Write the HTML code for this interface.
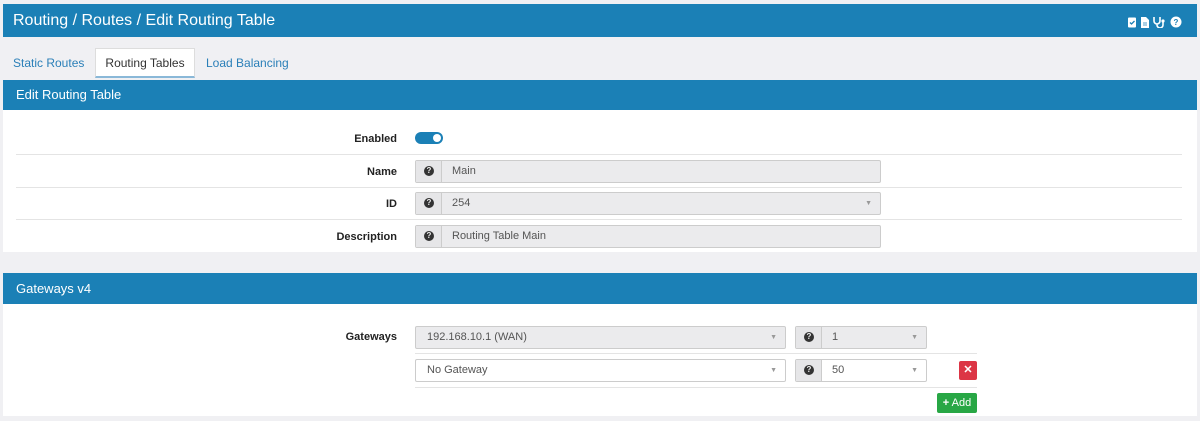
<!DOCTYPE html>
<html><head><style>
*{box-sizing:border-box;margin:0;padding:0}
body{width:1200px;height:421px;background:#f0f0f3;font-family:"Liberation Sans",sans-serif;font-size:11px;color:#333;position:relative;overflow:hidden}
.abs{position:absolute}
.blue{background:#1b80b6;color:#fff}
.lbl{position:absolute;right:803px;font-weight:bold;font-size:11px;color:#222}
.sep{position:absolute;left:16px;width:1166px;height:1px;background:#e4e4e4}
.inp{position:absolute;border:1px solid #ccc;border-radius:2px;background:#ebebed;height:23px;font-size:11px;color:#555;line-height:23px}
.inp > span{top:-1px}
.inp .h{position:absolute;left:0;top:0;width:26px;height:21px;border-right:1px solid #ccc;background:#e6e6e8}
.q{position:absolute;left:8px;top:5px;width:10px;height:10px;border-radius:50%;background:#333;color:#eee;font-size:8px;line-height:10px;font-weight:bold;text-align:center}
.car{position:absolute;right:8px;color:#999;font-size:7px}
</style></head><body>
<div class="abs blue" style="left:3px;top:4px;width:1194px;height:33px;font-size:16px;line-height:33px;padding-left:10px">Routing / Routes / Edit Routing Table
<svg style="position:absolute;right:10px;top:12px" width="60" height="12" viewBox="0 0 60 12">
<rect x="1" y="1.5" width="8" height="10" rx="1" fill="#fff"/><path d="M3 6.5l1.5 1.5 3-3" stroke="#1b80b6" stroke-width="1.3" fill="none"/>
<path d="M14 1h5l3 3v8h-8z" fill="#fff"/><path d="M16 7h4M16 9h4" stroke="#1b80b6" stroke-width="0.8"/>
<path d="M27 1v4a3 3 0 0 0 6 0V1M30 8v1a3 3 0 0 0 6 0V6" stroke="#fff" stroke-width="1.6" fill="none"/><circle cx="36" cy="5" r="1.6" fill="#fff"/>
<circle cx="49" cy="6" r="5.5" fill="#fff"/><text x="49" y="9" font-size="8" font-weight="bold" fill="#1b80b6" text-anchor="middle" font-family="Liberation Sans">?</text>
</svg></div>
<div class="abs" style="left:13px;top:56px;color:#2a7fb8;font-size:12px">Static Routes</div>
<div class="abs" style="left:95px;top:48px;width:100px;height:30px;background:#fff;border:1px solid #ddd;border-bottom:2px solid #8ab8d8;font-size:12px;text-align:center;line-height:28px;color:#333">Routing Tables</div>
<div class="abs" style="left:206px;top:56px;color:#2a7fb8;font-size:12px">Load Balancing</div>
<div class="abs blue" style="left:3px;top:80px;width:1194px;height:30px;font-size:13px;line-height:30px;padding-left:13px">Edit Routing Table</div>
<div class="abs" style="left:3px;top:110px;width:1194px;height:142px;background:#fff"></div>
<div class="lbl" style="top:133px">Enabled</div>
<div class="abs" style="left:415px;top:132px;width:28px;height:12px;border-radius:6px;background:#1b80b6"><div style="position:absolute;right:2px;top:2px;width:8px;height:8px;border-radius:50%;background:#fff"></div></div>
<div class="sep" style="top:154px"></div>
<div class="lbl" style="top:166px">Name</div>
<div class="inp" style="left:415px;top:160px;width:466px"><div class="h"><span class="q">?</span></div><span style="position:absolute;left:36px">Main</span></div>
<div class="sep" style="top:187px"></div>
<div class="lbl" style="top:198px">ID</div>
<div class="inp" style="left:415px;top:192px;width:466px"><div class="h"><span class="q">?</span></div><span style="position:absolute;left:36px">254</span><span class="car">▼</span></div>
<div class="sep" style="top:219px"></div>
<div class="lbl" style="top:231px">Description</div>
<div class="inp" style="left:415px;top:225px;width:466px"><div class="h"><span class="q">?</span></div><span style="position:absolute;left:36px">Routing Table Main</span></div>
<div class="abs blue" style="left:3px;top:273px;width:1194px;height:31px;font-size:13px;line-height:31px;padding-left:13px">Gateways v4</div>
<div class="abs" style="left:3px;top:304px;width:1194px;height:112px;background:#fff"></div>
<div class="lbl" style="top:331px">Gateways</div>
<div class="inp" style="left:415px;top:326px;width:371px"><span style="position:absolute;left:11px">192.168.10.1 (WAN)</span><span class="car">▼</span></div>
<div class="inp" style="left:795px;top:326px;width:132px"><div class="h"><span class="q">?</span></div><span style="position:absolute;left:36px">1</span><span class="car">▼</span></div>
<div class="abs" style="left:415px;top:353px;width:562px;height:1px;background:#e4e4e4"></div>
<div class="inp" style="left:415px;top:359px;width:371px;background:#fff"><span style="position:absolute;left:11px">No Gateway</span><span class="car">▼</span></div>
<div class="inp" style="left:795px;top:359px;width:132px;background:#fff"><div class="h"><span class="q">?</span></div><span style="position:absolute;left:36px">50</span><span class="car">▼</span></div>
<div class="abs" style="left:959px;top:361px;width:18px;height:19px;background:#dc3545;border-radius:2px;color:#fff;font-weight:bold;text-align:center;line-height:19px;font-size:11px">✕</div>
<div class="abs" style="left:415px;top:387px;width:562px;height:1px;background:#e4e4e4"></div>
<div class="abs" style="left:937px;top:393px;width:40px;height:20px;background:#28a745;border-radius:2px;color:#fff;text-align:center;line-height:20px;font-size:11px"><b>+</b> Add</div>
</body></html>
